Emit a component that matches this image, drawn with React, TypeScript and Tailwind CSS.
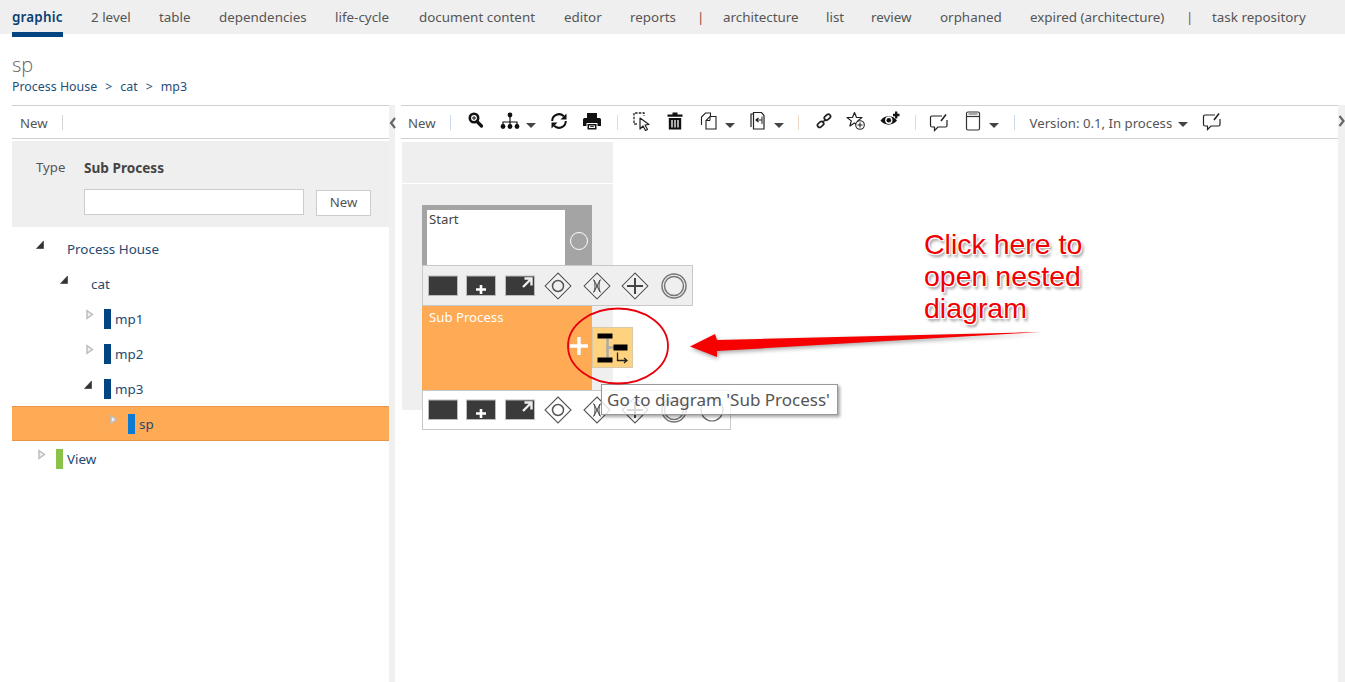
import React from "react";

const font = "font-['Noto_Sans','Open_Sans',sans-serif]";

function Caret() {
  return <span className="ml-[6px] mt-[12px] block h-0 w-0 border-x-[5px] border-t-[5px] border-x-transparent border-t-[#444]" />;
}
function Sep({ color = "#d4d4d4" }: { color?: string }) {
  return <span className="block h-[15px] w-px" style={{ backgroundColor: color }} />;
}

const I = ({ children, w = 20, h = 20 }: { children: React.ReactNode; w?: number; h?: number }) => (
  <svg width={w} height={h} viewBox={`0 0 ${w} ${h}`} className="block shrink-0">
    {children}
  </svg>
);

const SearchIcon = () => (
  <I>
    <circle cx="8" cy="7" r="4.2" fill="none" stroke="#111" strokeWidth="2.6" />
    <path d="M11 10.5l4.5 4.5" stroke="#111" strokeWidth="3.2" strokeLinecap="round" />
    <path d="M6 7h4M8 5v4" stroke="#111" strokeWidth="1" />
  </I>
);
const SitemapIcon = () => (
  <I>
    <circle cx="10" cy="4" r="2.4" fill="#111" />
    <path d="M10 6v5M3 14v-3h14v3M10 11v3" fill="none" stroke="#111" strokeWidth="1.2" />
    <circle cx="3" cy="15.500" r="2.4" fill="#111" />
    <circle cx="10" cy="15.500" r="2.4" fill="#111" />
    <circle cx="17" cy="15.500" r="2.4" fill="#111" />
  </I>
);
const RefreshIcon = () => (
  <I>
    <path d="M3.200 10a6.800 6.800 0 0 1 11.600-4.800" fill="none" stroke="#111" strokeWidth="2" />
    <path d="M17.500 2.500v6h-6z" fill="#111" />
    <path d="M16.800 10a6.800 6.800 0 0 1-11.600 4.800" fill="none" stroke="#111" strokeWidth="2" />
    <path d="M2.500 17.500v-6h6z" fill="#111" />
  </I>
);
const PrintIcon = () => (
  <I>
    <path d="M5 2h10v5H5z" fill="#111" />
    <path d="M2.500 7h15a1.500 1.500 0 0 1 1.500 1.500V15h-3.500v-3h-11v3H1V8.500A1.500 1.500 0 0 1 2.500 7z" fill="#111" />
    <path d="M5.500 13h9v5.500h-9z" fill="#111" />
    <path d="M7 14.500h6v2.500H7z" fill="#fff" />
    <path d="M8 15.500h4" stroke="#111" strokeWidth="0.8" />
  </I>
);
const SelectIcon = () => (
  <I>
    <path d="M2 12V2h10v3" fill="none" stroke="#222" strokeWidth="1.3" strokeDasharray="2.500 1.200" />
    <path d="M2 13h3" stroke="#222" strokeWidth="1.3" />
    <path d="M8 7l9 6.500-4 .5 2.500 4.500-2 1-2.500-4.500L8 18z" fill="#fff" stroke="#222" strokeWidth="1.200" strokeLinejoin="round" />
  </I>
);
const TrashIcon = () => (
  <I>
    <path d="M7.500 1.500h5v2h5v2.300h-15V3.500h5z" fill="#111" />
    <path d="M3.800 7h12.400v11.500H3.800z" fill="#111" />
    <path d="M7 9v7.500M10 9v7.500M13 9v7.500" stroke="#fff" strokeWidth="1.300" />
  </I>
);
const CopyIcon = () => (
  <I>
    <path d="M2.500 14V6l4-4h5v3" fill="none" stroke="#222" strokeWidth="1.100" />
    <path d="M7 18V9.500l4-4h6V18z" fill="#fff" stroke="#222" strokeWidth="1.100" />
    <path d="M7 9.500h4v-4" fill="none" stroke="#222" strokeWidth="1" />
  </I>
);
const PasteIcon = () => (
  <I>
    <path d="M3 16V3h9" fill="none" stroke="#222" strokeWidth="1.200" />
    <path d="M5.500 18V1.500h8l2.500 3V18z" fill="#fff" stroke="#222" strokeWidth="1.200" />
    <path d="M14 9H8.500M10.500 7l-2.500 2 2.500 2" fill="none" stroke="#222" strokeWidth="1.200" />
    <path d="M14 5.500V13" stroke="#222" strokeWidth="1" />
  </I>
);
const LinkIcon = () => (
  <I>
    <g fill="none" stroke="#222" strokeWidth="2" transform="translate(1.500 1.500) scale(0.85)">
      <rect x="10" y="3" width="8" height="5" rx="2.500" transform="rotate(-40 14 5.500)" />
      <rect x="2" y="11.500" width="8" height="5" rx="2.500" transform="rotate(-40 6 14)" />
      <path d="M8 12l4-4" strokeWidth="1.800" />
    </g>
  </I>
);
const StarPlusIcon = () => (
  <I>
    <path d="M8.500 1.500l2 5h5.500l-4.300 3.400 1.400 5.100-4.600-3-4.600 3 1.400-5.100L1 6.500h5.500z" fill="#fff" stroke="#222" strokeWidth="1.200" strokeLinejoin="round" />
    <circle cx="14" cy="14" r="4.300" fill="#fff" stroke="#222" strokeWidth="1.100" />
    <path d="M11.500 14h5M14 11.500v5" stroke="#222" strokeWidth="1.100" />
  </I>
);
const EyePlusIcon = () => (
  <I>
    <path d="M0.500 10.500C4 5 13 4.500 17 10.500 13 16 4 16 0.500 10.500z" fill="#111" />
    <circle cx="8.800" cy="10.300" r="3.700" fill="#fff" />
    <circle cx="8.800" cy="10.300" r="2.300" fill="#111" />
    <path d="M13 5h6.500M16.200 1.500v7" stroke="#111" strokeWidth="2.300" />
  </I>
);
const CommentIcon = () => (
  <I>
    <path d="M13 4H3a1.500 1.500 0 0 0-1.500 1.500v8A1.500 1.500 0 0 0 3 15h2.500v3.500L9 15h7.500A1.500 1.500 0 0 0 18 13.500V8" fill="none" stroke="#222" strokeWidth="1.200" />
    <path d="M12 9l5-6.500" stroke="#222" strokeWidth="1.600" />
  </I>
);
const BookIcon = () => (
  <I>
    <rect x="3.500" y="1" width="13" height="18" rx="1.500" fill="#fff" stroke="#333" strokeWidth="1.200" />
    <path d="M3.500 5.500h13" stroke="#333" strokeWidth="1.200" />
    <path d="M5.500 3h9" stroke="#888" strokeWidth="1.500" />
  </I>
);

function PanelChevron({ dir }: { dir: "l" | "r" }) {
  return (
    <svg width="7" height="12" viewBox="0 0 7 12" className={`shrink-0 ${dir === "l" ? "mt-[12px]" : "mt-[10px]"}`}>
      <path d={dir === "l" ? "M6 1L2 6l4 5" : "M1.500 1l4 5-4 5"} fill="none" stroke="#666" strokeWidth="2.200" />
    </svg>
  );
}

function TreeArrow({ open }: { open: boolean }) {
  return open ? (
    <svg width="10" height="10" viewBox="0 0 10 10" className="-ml-[2px] block">
      <path d="M7.500 1v7.500H0.500z" fill="#333" stroke="#333" strokeWidth="0.600" strokeLinejoin="round" />
    </svg>
  ) : (
    <svg width="10" height="11" viewBox="0 0 10 11" className="-ml-[1px] -mt-[1px] block">
      <path d="M2 1.500v8L7.500 5.500z" fill="#eee" stroke="#bbb" strokeWidth="1.400" />
    </svg>
  );
}

type Row = { label: string; indent: number; open: boolean; bar?: string; selected?: boolean };
const rows: Row[] = [
  { label: "Process House", indent: 24, open: true },
  { label: "cat", indent: 48, open: true },
  { label: "mp1", indent: 72, open: false, bar: "#004481" },
  { label: "mp2", indent: 72, open: false, bar: "#004481" },
  { label: "mp3", indent: 72, open: true, bar: "#004481" },
  { label: "sp", indent: 96, open: false, bar: "#0a7bd0", selected: true },
  { label: "View", indent: 24, open: false, bar: "#8bc34a" },
];

function TreeRow({ r }: { r: Row }) {
  return (
    <div
      className={`flex h-[35px] items-center text-[13.400px] text-[#26496f] ${r.selected ? "border-y border-[#e8964b] bg-[#ffaa55]" : ""}`}
      style={{ paddingLeft: r.indent }}
    >
      <span className="flex h-[20px] w-[20px] items-start pl-[2px] pt-[1px]">
        <TreeArrow open={r.open} />
      </span>
      <span className="flex w-[11px] shrink-0">
        {r.bar && <span className="h-[20px] w-[7px]" style={{ backgroundColor: r.bar }} />}
      </span>
      <span className="pt-[2px]">{r.label}</span>
    </div>
  );
}

const Box = ({ children }: { children?: React.ReactNode }) => (
  <svg width="30" height="22" viewBox="0 0 30 22" className="block shrink-0">
    <rect x="0.500" y="1" width="29" height="19.500" fill="#3a3a3a" stroke="#bbb" strokeWidth="1" />
    {children}
  </svg>
);
const Diamond = ({ children }: { children?: React.ReactNode }) => (
  <svg width="30" height="30" viewBox="0 0 30 30" className="block shrink-0">
    <path d="M15 2L28 15 15 28 2 15z" fill="none" stroke="#fff" strokeWidth="2.600" />
    <path d="M15 2L28 15 15 28 2 15z" fill="none" stroke="#555" strokeWidth="1.100" />
    {children}
  </svg>
);
function ShapeBar({ extra }: { extra?: boolean }) {
  return (
    <div className="flex items-center gap-[8.500px] pl-[4.500px]">
      <Box />
      <Box>
        <path d="M15 10v9M10 14.500h10" stroke="#fff" strokeWidth="2.600" />
      </Box>
      <Box>
        <path d="M18 12l8-8M19.500 3.500h7v7" fill="none" stroke="#eee" strokeWidth="2.400" />
      </Box>
      <Diamond>
        <circle cx="15" cy="15" r="5.500" fill="none" stroke="#555" strokeWidth="1.500" />
      </Diamond>
      <Diamond>
        <path d="M11.500 8.500c2 3 2 10 0 13M18.500 8.500c-2 3-2 10 0 13M12 9l6 12M18 9l-6 12" fill="none" stroke="#444" strokeWidth="1" />
      </Diamond>
      <Diamond>
        <path d="M15 7v16M7 15h16" stroke="#444" strokeWidth="2" />
      </Diamond>
      <svg width="30" height="30" viewBox="0 0 30 30" className="block shrink-0">
        <circle cx="15" cy="15" r="12" fill="none" stroke="#777" strokeWidth="1.500" />
        <circle cx="15" cy="15" r="9.500" fill="none" stroke="#777" strokeWidth="1.500" />
      </svg>
      {extra && (
        <svg width="30" height="30" viewBox="0 0 30 30" className="block shrink-0">
          <circle cx="15" cy="15" r="11" fill="none" stroke="#666" strokeWidth="1.200" />
        </svg>
      )}
    </div>
  );
}

const tabs = ["graphic", "2 level", "table", "dependencies", "life-cycle", "document content", "editor", "reports", "|", "architecture", "list", "review", "orphaned", "expired (architecture)", "|", "task repository"];

export default function App() {
  return (
    <div className={`${font} relative h-[682px] w-[1345px] overflow-hidden bg-white text-[13.200px] text-[#444]`}>
      <nav className="grid h-[34px] grid-cols-[79px_68px_60px_116px_84px_145px_66px_67px_26px_103px_45px_69px_90px_156px_26px_auto] items-center bg-[#efefef] pl-[12px] pt-[1px] text-[13.400px] text-[#555]">
        {tabs.map((t, i) =>
          t === "|" ? (
            <span key={i} className="text-[#8a4a3a]">|</span>
          ) : i === 0 ? (
            <span key={i} className="relative w-[51px] font-semibold tracking-[0.2px] text-[#0b3f70]">
              {t}
              <span className="absolute -bottom-[9px] left-0 right-0 h-[5px] bg-[#004481]" />
            </span>
          ) : (
            <span key={i}>{t}</span>
          ),
        )}
      </nav>

      <header className="h-[71px] pl-[12px] pt-[18px]">
        <div className="font-['Open_Sans',sans-serif] text-[20px] font-light leading-[26px] text-[#666]">sp</div>
        <div className="flex items-center gap-[8px] text-[12.400px] leading-[17px] text-[#1f4e79]">
          <span>Process House</span><span>&gt;</span><span>cat</span><span>&gt;</span><span>mp3</span>
        </div>
      </header>

      <main className="flex h-[577px]">
        <section className="ml-[12px] w-[377px]">
          <div className="flex h-[34px] items-center gap-[14px] border-y border-[#d0d0d0] pl-[8px] text-[#555]">
            <span className="mt-[4px]">New</span><Sep />
          </div>
          <div className="mt-[2px] h-[86px] bg-[#efefef] pl-[24px] pt-[17px]">
            <div className="flex h-[20px] items-center">
              <span className="w-[48px] text-[#555]">Type</span>
              <span className="text-[13.600px] font-bold text-[#444]">Sub Process</span>
            </div>
            <div className="mt-[11px] flex pl-[48px]">
              <span className="h-[26px] w-[220px] border border-[#ccc] bg-white" />
              <span className="ml-[12px] mt-px flex h-[26px] w-[55px] items-center justify-center border border-[#ccc] bg-white text-[#555]">New</span>
            </div>
          </div>
          <div className="mt-[4px]">
            {rows.map((r) => (
              <TreeRow key={r.label} r={r} />
            ))}
          </div>
        </section>

        <div className="flex w-[6px] justify-center overflow-visible bg-[#f0f0f0]"><PanelChevron dir="l" /></div>

        <section className="ml-[6px] flex w-[937px] flex-col">
          <div className="flex h-[34px] shrink-0 items-center border-y border-[#d0d0d0] pl-[7px] text-[#555]">
            <span className="mt-[4px]">New</span>
            <span className="ml-[14px]"><Sep color="#c9d8ea" /></span>
            <span className="ml-[15px] -mt-[3px]"><SearchIcon /></span>
            <span className="ml-[14px] flex -mt-[2px]"><SitemapIcon /><Caret /></span>
            <span className="ml-[13px] -mt-[2px]"><RefreshIcon /></span>
            <span className="ml-[13px] -mt-[2px]"><PrintIcon /></span>
            <span className="ml-[15px]"><Sep color="#ecd9c6" /></span>
            <span className="ml-[14px] -mt-[3px]"><SelectIcon /></span>
            <span className="ml-[13px] -mt-[2px]"><TrashIcon /></span>
            <span className="ml-[14px] flex -mt-[2px]"><CopyIcon /><Caret /></span>
            <span className="ml-[13px] flex -mt-[2px]"><PasteIcon /><Caret /></span>
            <span className="ml-[14px]"><Sep color="#ecd9c6" /></span>
            <span className="ml-[15px] -mt-[2px]"><LinkIcon /></span>
            <span className="ml-[12px] -mt-[2px]"><StarPlusIcon /></span>
            <span className="ml-[14px] -mt-[4px]"><EyePlusIcon /></span>
            <span className="ml-[15px]"><Sep color="#ecd9c6" /></span>
            <span className="ml-[13px]"><CommentIcon /></span>
            <span className="ml-[14px] flex -mt-[3px]"><BookIcon /><Caret /></span>
            <span className="ml-[15px]"><Sep color="#c9d8ea" /></span>
            <span className="ml-[15px] mt-[4px] text-[#555]">Version: 0.1, In process</span>
            <span className="ml-[6px] mt-[4px] block h-0 w-0 border-x-[5px] border-t-[5px] border-x-transparent border-t-[#444]" />
            <span className="ml-[14px] -mt-[3px]"><CommentIcon /></span>
          </div>

          <div className="relative flex-1">
            <div className="ml-px mt-[3px] h-[41px] w-[211px] bg-[#efefef]" />
            <div className="ml-px mt-px h-[226px] w-[211px] bg-[#efefef]" />

            {/* diagram nodes */}
            <div className="absolute left-[21px] top-[66px] h-[60px] w-[170px] border-[5px] border-b-0 border-[#a4a4a4] bg-white">
              <span className="ml-[2px] block text-[13.200px] leading-[18px] text-[#444]">Start</span>
              <span className="absolute -right-[5px] bottom-0 -top-[5px] flex w-[27px] items-center justify-center bg-[#a4a4a4]">
                <span className="mt-[12px] h-[18px] w-[18px] rounded-full border border-white" />
              </span>
            </div>
            <div className="absolute left-[21px] top-[126px] flex h-[41px] w-[271px] items-center border border-[#c8c8c8] bg-[#efefef]">
              <ShapeBar />
            </div>
            <div className="absolute left-[21px] top-[167px] h-[84px] w-[170px] bg-[#ffaa55] pl-[7px] pt-[2px] text-[13.200px] leading-[18px] text-white">
              Sub Process
              <svg width="20" height="20" viewBox="0 0 20 20" className="absolute left-[147px] top-[30px]">
                <path d="M10 1v18M1 10h18" stroke="#fff" strokeWidth="3.400" />
              </svg>
            </div>
            <div className="absolute left-[191px] top-[188px] flex h-[41px] w-[41px] items-center justify-center border border-[#d8c9a8] bg-[#ffd27f]">
              <svg width="36" height="36" viewBox="0 0 36 36">
                <path d="M12.500 5v24M12.500 17.500h8" stroke="#aaa" strokeWidth="2.500" />
                <rect x="2.500" y="3.500" width="15" height="5" fill="#000" />
                <rect x="18.500" y="14.500" width="14" height="6" fill="#000" />
                <rect x="2.500" y="27.500" width="15" height="5" fill="#000" />
                <path d="M22.500 22.500v8h9M29 28l3 2.500-3 2.500" fill="none" stroke="#222" strokeWidth="1.300" />
              </svg>
            </div>
            <div className="absolute left-[21px] top-[251px] flex h-[40px] w-[309px] items-center border border-[#c8c8c8] bg-white">
              <ShapeBar extra />
            </div>

            {/* overlays */}
            <div className="absolute left-[200px] top-[245px] flex h-[31px] w-[237px] items-center whitespace-nowrap border border-[#999] bg-white/80 pl-[5px] text-[17px] text-[#555] shadow-[2px_2px_3px_rgba(0,0,0,0.35)]">
              Go to diagram 'Sub Process'
            </div>
            <svg className="pointer-events-none absolute left-[160px] top-[160px]" width="500" height="100" viewBox="0 0 500 100">
              <ellipse cx="57" cy="47" rx="50" ry="37.500" fill="none" stroke="#e8000b" strokeWidth="1.800" />
              <path d="M129 47.500L154 35l2 6L479 33 156 52l0 6z" fill="#f60000" className="[filter:drop-shadow(1px_2px_2px_rgba(0,0,0,0.35))]" />
            </svg>
            <div className="absolute left-[523px] top-[89px] whitespace-nowrap font-['Liberation_Sans',sans-serif] text-[28.500px] leading-[32px] text-[#f00000] [text-shadow:-1px_-1px_0_#fff,1px_-1px_0_#fff,-1px_1px_0_#fff,1px_1px_0_#fff,2px_3px_3px_rgba(0,0,0,0.45)]">
              Click here to<br />open nested<br />diagram
            </div>
          </div>
        </section>

        <div className="flex w-[7px] justify-center bg-[#f0f0f0]"><PanelChevron dir="r" /></div>
      </main>
    </div>
  );
}
